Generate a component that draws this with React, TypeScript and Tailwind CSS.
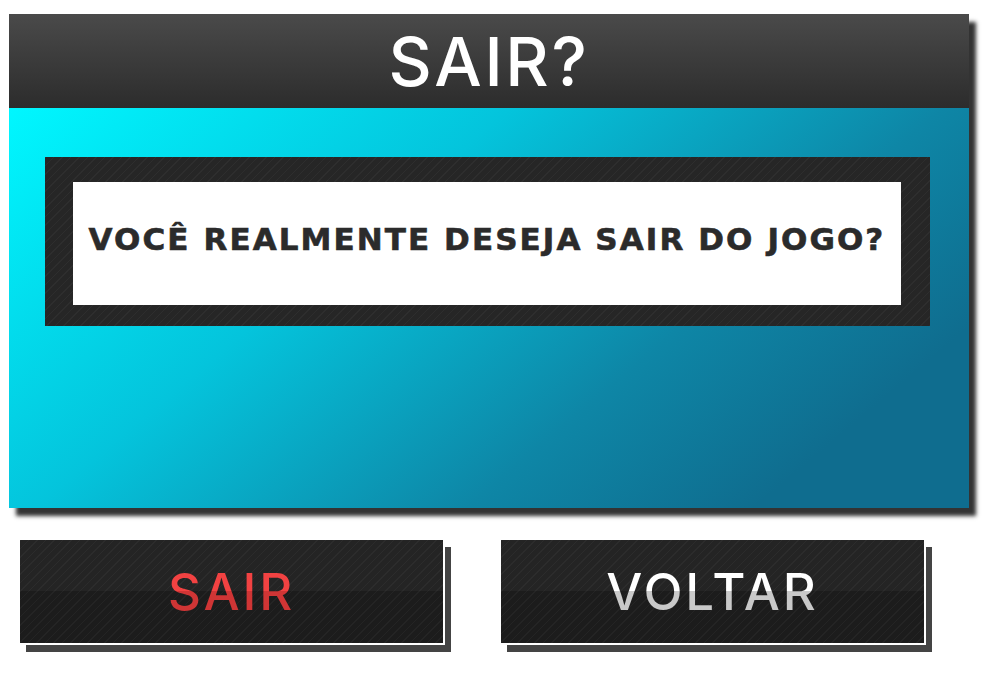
export default function App() {
  const stripes =
    'bg-[repeating-linear-gradient(135deg,rgba(255,255,255,0.035)_0px,rgba(255,255,255,0.035)_1px,transparent_1px,transparent_6px)]';

  return (
    <div className="min-h-[674px] w-[992px] bg-white pt-[14px] pl-[9px] font-['Inter',sans-serif]">
      {/* painel */}
      <div className="w-[960px] shadow-[7px_8px_4px_rgba(40,40,40,0.95)]">
        <div className="flex h-[94px] items-center justify-center bg-[linear-gradient(to_bottom,#4a4a4a,#2c2c2c)]">
          <h1 className="text-[67px] leading-none font-medium tracking-[0.04em] text-white">SAIR?</h1>
        </div>
        <div className="h-[400px] bg-[linear-gradient(140deg,#00f7ff_0%,#04c4dc_35%,#0e86a6_65%,#0f6d8f_85%)] pt-[49px] pl-[36px]">
          <div className={`w-[885px] bg-[#262626] pt-[25px] pr-[29px] pb-[21px] pl-[28px] ${stripes}`}>
            <div className="flex h-[123px] items-center justify-center bg-white pb-[8px]">
              <p className="font-['DejaVu_Sans',sans-serif] text-[31px] leading-none font-bold tracking-[0.067em] text-[#2b2b2b] [-webkit-text-stroke:0.6px_#2b2b2b]">
                VOCÊ REALMENTE DESEJA SAIR DO JOGO?
              </p>
            </div>
          </div>
        </div>
      </div>

      {/* botões */}
      <div className="mt-[32px] flex gap-[58px] pl-[11px]">
        <GameButton label="SAIR" textClass="bg-[linear-gradient(to_bottom,#f24242_50%,#d03535_50%)]" />
        <GameButton label="VOLTAR" textClass="bg-[linear-gradient(to_bottom,#ffffff_50%,#c9c9c9_50%)]" />
      </div>
    </div>
  );
}

function GameButton({ label, textClass }: { label: string; textClass: string }) {
  return (
    <button className="relative flex h-[103px] w-[423px] items-center justify-center bg-[linear-gradient(to_bottom,#242424_50%,#1c1c1c_50%)] shadow-[0_0_0_2px_#ffffff,7px_8px_0_1px_#444444]">
      <span className="absolute inset-0 bg-[repeating-linear-gradient(135deg,rgba(255,255,255,0.035)_0px,rgba(255,255,255,0.035)_1px,transparent_1px,transparent_6px)]" />
      <span
        className={`relative bg-clip-text text-[51px] leading-none font-medium tracking-[0.055em] text-transparent ${textClass}`}
      >
        {label}
      </span>
    </button>
  );
}
